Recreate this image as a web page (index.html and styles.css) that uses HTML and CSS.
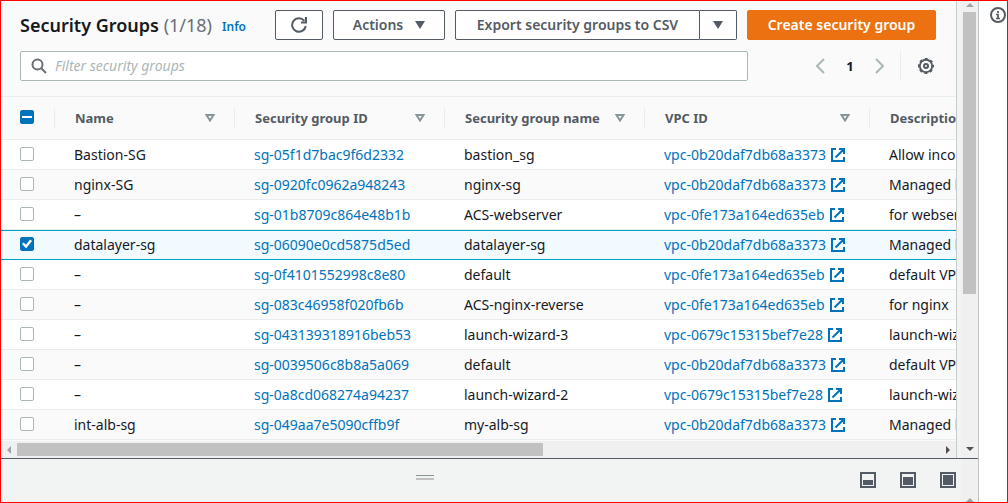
FILE: index.html
```
<!DOCTYPE html>
<html lang="en">
<head>
<meta charset="utf-8">
<title>Security Groups</title>
<link rel="stylesheet" href="styles.css">
</head>
<body>
<svg class="defs" aria-hidden="true">
  <symbol id="external" viewBox="0 0 16 16"><path d="M6 2H2v12h12v-4M9 2h5v5M14 2L5.500 10.500" fill="none" stroke="currentColor" stroke-width="2"/></symbol>
  <symbol id="sort" viewBox="0 0 10 8"><path d="M1.500 1h7L5 6.500z" fill="none" stroke="currentColor" stroke-width="2"/></symbol>
  <symbol id="caret" viewBox="0 0 10 8"><path d="M0 0h10L5 8z" fill="currentColor"/></symbol>
</svg>
<div class="app">
  <div class="workspace">
    <div class="upper">
      <main class="panel">
        <header class="toolbar">
          <h1 class="title">Security Groups <span class="count">(1/18)</span></h1>
          <a class="info" href="#">Info</a>
          <div class="actions">
            <button class="btn icon-btn" aria-label="Refresh"><svg width="16" height="16" viewBox="0 0 16 16" fill="none" stroke="currentColor" stroke-width="2"><path d="M14.700 9A6.800 6.800 0 1 1 13.300 3.800"/><path d="M10 5.500h5V0"/></svg></button>
            <button class="btn menu-btn">Actions <svg class="caret"><use href="#caret"/></svg></button>
            <div class="split">
              <button class="btn export">Export security groups to CSV</button>
              <button class="btn more" aria-label="More export options"><svg class="caret"><use href="#caret"/></svg></button>
            </div>
            <button class="btn primary">Create security group</button>
          </div>
        </header>
        <div class="filters">
          <label class="search">
            <svg width="16" height="16" viewBox="0 0 16 16" fill="none" stroke="currentColor" stroke-width="2"><circle cx="6.500" cy="6.500" r="5"/><path d="M10 10l5 5"/></svg>
            <input type="text" placeholder="Filter security groups" aria-label="Filter security groups">
          </label>
          <nav class="pages" aria-label="Pagination">
            <button class="plain pale" aria-label="Previous page"><svg width="10" height="16" viewBox="0 0 10 16" fill="none" stroke="currentColor" stroke-width="2"><path d="M9 1L2 8l7 7"/></svg></button>
            <button class="plain page">1</button>
            <button class="plain pale" aria-label="Next page"><svg width="10" height="16" viewBox="0 0 10 16" fill="none" stroke="currentColor" stroke-width="2"><path d="M1 1l7 7-7 7"/></svg></button>
          </nav>
          <button class="plain settings" aria-label="Preferences"><svg width="16" height="16" viewBox="0 0 16 16" fill="none" stroke="currentColor"><circle cx="8" cy="8" r="6.200" stroke-width="1.900"/><circle cx="8" cy="8" r="7.300" stroke-width="1.500" stroke-dasharray="3 2.733" stroke-dashoffset="1.500"/><circle cx="8" cy="8" r="2" stroke-width="2"/></svg></button>
        </div>
        <table class="groups">
          <colgroup><col class="c-check"><col class="c-name"><col class="c-id"><col class="c-group"><col class="c-vpc"><col></colgroup>
          <thead>
            <tr>
              <th><input type="checkbox" class="check mixed" aria-label="Select all"></th>
              <th><div class="head">Name <svg class="sort"><use href="#sort"/></svg></div></th>
              <th><div class="head">Security group ID <svg class="sort"><use href="#sort"/></svg></div></th>
              <th><div class="head">Security group name <svg class="sort"><use href="#sort"/></svg></div></th>
              <th><div class="head">VPC ID <svg class="sort"><use href="#sort"/></svg></div></th>
              <th><div class="head">Description</div></th>
            </tr>
          </thead>
          <tbody>
            <tr><td><input type="checkbox" class="check" aria-label="Select Bastion-SG"></td><td>Bastion-SG</td><td><a href="#">sg-05f1d7bac9f6d2332</a></td><td>bastion_sg</td><td><a href="#">vpc-0b20daf7db68a3373 <svg class="ext"><use href="#external"/></svg></a></td><td>Allow incoming</td></tr>
            <tr><td><input type="checkbox" class="check" aria-label="Select nginx-SG"></td><td>nginx-SG</td><td><a href="#">sg-0920fc0962a948243</a></td><td>nginx-sg</td><td><a href="#">vpc-0b20daf7db68a3373 <svg class="ext"><use href="#external"/></svg></a></td><td>Managed by</td></tr>
            <tr><td><input type="checkbox" class="check" aria-label="Select ACS-webserver"></td><td>–</td><td><a href="#">sg-01b8709c864e48b1b</a></td><td>ACS-webserver</td><td><a href="#">vpc-0fe173a164ed635eb <svg class="ext"><use href="#external"/></svg></a></td><td>for webserver</td></tr>
            <tr class="selected"><td><input type="checkbox" class="check" checked aria-label="Select datalayer-sg"></td><td>datalayer-sg</td><td><a href="#">sg-06090e0cd5875d5ed</a></td><td>datalayer-sg</td><td><a href="#">vpc-0b20daf7db68a3373 <svg class="ext"><use href="#external"/></svg></a></td><td>Managed by</td></tr>
            <tr><td><input type="checkbox" class="check" aria-label="Select default"></td><td>–</td><td><a href="#">sg-0f4101552998c8e80</a></td><td>default</td><td><a href="#">vpc-0fe173a164ed635eb <svg class="ext"><use href="#external"/></svg></a></td><td>default VPC</td></tr>
            <tr><td><input type="checkbox" class="check" aria-label="Select ACS-nginx-reverse"></td><td>–</td><td><a href="#">sg-083c46958f020fb6b</a></td><td>ACS-nginx-reverse</td><td><a href="#">vpc-0fe173a164ed635eb <svg class="ext"><use href="#external"/></svg></a></td><td>for nginx</td></tr>
            <tr><td><input type="checkbox" class="check" aria-label="Select launch-wizard-3"></td><td>–</td><td><a href="#">sg-043139318916beb53</a></td><td>launch-wizard-3</td><td><a href="#">vpc-0679c15315bef7e28 <svg class="ext"><use href="#external"/></svg></a></td><td>launch-wizard</td></tr>
            <tr><td><input type="checkbox" class="check" aria-label="Select default"></td><td>–</td><td><a href="#">sg-0039506c8b8a5a069</a></td><td>default</td><td><a href="#">vpc-0b20daf7db68a3373 <svg class="ext"><use href="#external"/></svg></a></td><td>default VPC</td></tr>
            <tr><td><input type="checkbox" class="check" aria-label="Select launch-wizard-2"></td><td>–</td><td><a href="#">sg-0a8cd068274a94237</a></td><td>launch-wizard-2</td><td><a href="#">vpc-0679c15315bef7e28 <svg class="ext"><use href="#external"/></svg></a></td><td>launch-wizard</td></tr>
            <tr><td><input type="checkbox" class="check" aria-label="Select int-alb-sg"></td><td>int-alb-sg</td><td><a href="#">sg-049aa7e5090cffb9f</a></td><td>my-alb-sg</td><td><a href="#">vpc-0b20daf7db68a3373 <svg class="ext"><use href="#external"/></svg></a></td><td>Managed by</td></tr>
          </tbody>
        </table>
        <div class="hscroll"><span class="arrow left"></span><span class="track"><span class="hthumb"></span></span><span class="arrow right"></span></div>
      </main>
      <div class="vscroll"><span class="arrow up"></span><span class="vthumb"></span><span class="arrow down"></span></div>
    </div>
    <footer class="details">
      <div class="drag-area"><span class="handle"></span></div>
      <div class="sizes">
        <button class="plain" aria-label="Small panel"><svg width="16" height="16" viewBox="0 0 16 16"><rect x="1" y="1" width="14" height="14" fill="none" stroke="currentColor" stroke-width="2"/><rect x="3" y="8" width="10" height="5" fill="currentColor"/></svg></button>
        <button class="plain" aria-label="Medium panel"><svg width="16" height="16" viewBox="0 0 16 16"><rect x="1" y="1" width="14" height="14" fill="none" stroke="currentColor" stroke-width="2"/><rect x="3" y="5" width="10" height="8" fill="currentColor"/></svg></button>
        <button class="plain" aria-label="Full panel"><svg width="16" height="16" viewBox="0 0 16 16"><rect x="1" y="1" width="14" height="14" fill="none" stroke="currentColor" stroke-width="2"/><rect x="3" y="3" width="10" height="10" fill="currentColor"/></svg></button>
      </div>
      <div class="corner"><span class="arrow up"></span></div>
    </footer>
  </div>
  <aside class="rail">
    <button class="plain" aria-label="Open help panel"><svg width="16" height="16" viewBox="0 0 16 16" fill="none" stroke="currentColor" stroke-width="2"><circle cx="8" cy="8" r="7"/><path d="M8 4v2M6 7.500h2V11M6 11.500h4" stroke-width="1.700"/></svg></button>
  </aside>
</div>
</body>
</html>
```
FILE: styles.css
```
* { box-sizing: border-box; }
body { margin: 0; font: 14px/20px "Noto Sans", "Open Sans", sans-serif; color: #16191f; }
a { color: #0073bb; text-decoration: none; }
button { font: inherit; color: #545b64; margin: 0; cursor: pointer; }
svg { display: block; flex: none; }
.defs { position: absolute; width: 0; height: 0; }

.app { display: flex; height: 100vh; border: 1px solid #f00; overflow: hidden; background: #fff; }
.workspace { flex: 1; min-width: 0; display: flex; flex-direction: column; border-right: 1px solid #bfc5c7; background: #f2f3f3; }
.upper { flex: 1; min-height: 0; display: flex; }
.panel { flex: 1; min-width: 0; display: flex; flex-direction: column; background: #fafafa; border-right: 1px solid #c6cccd; overflow: hidden; }

.toolbar { display: flex; align-items: center; padding: 9px 20px 0 19px; white-space: nowrap; }
.title { margin: 0; font-size: 18px; line-height: 30px; font-weight: 600; }
.count { font-weight: 400; color: #687078; }
.info { margin-left: 10px; font-size: 12px; font-weight: 600; padding-top: 3px; }
.actions { margin-left: auto; display: flex; gap: 10px; }
.btn { height: 30px; padding: 0 20px; display: flex; align-items: center; justify-content: center; border: 1px solid #545b64; border-radius: 2px; background: #fff; font-size: 14px; font-weight: 600; }
.icon-btn { width: 48px; padding: 0; }
.menu-btn { width: 112px; padding: 0; gap: 12px; }
.caret { width: 10px; height: 8px; }
.split { display: flex; }
.export { width: 245px; padding: 0; border-radius: 2px 0 0 2px; }
.more { width: 37px; padding: 0; border-left: 0; border-radius: 0 2px 2px 0; }
.primary { width: 189px; padding: 0; background: #ec7211; border-color: #ec7211; color: #fff; }

.filters { display: flex; align-items: center; padding: 11px 20px 15px 19px; }
.search { flex: 1; display: flex; align-items: center; gap: 8px; height: 30px; padding: 0 10px; border: 1px solid #aab7b8; border-radius: 2px; background: #fff; color: #687078; }
.search input { flex: 1; min-width: 0; border: 0; padding: 0; background: none; font: inherit; outline: 0; }
.search input::placeholder { color: #aab7b8; font-style: italic; opacity: 1; }
.plain { display: flex; align-items: center; justify-content: center; border: 0; padding: 0; background: none; }
.pages { display: flex; align-items: center; padding-left: 67px; }
.pages .plain { width: 10px; }
.pages .page { width: 50px; font-size: 13px; font-weight: 700; color: #16191f; }
.pages .pale, .pale { color: #aab7b8; }
.settings { width: 36px; height: 30px; margin-left: 15px; padding: 0 2px 0 16px; border-left: 1px solid #eaeded; }

.groups { width: 100%; table-layout: fixed; border-collapse: separate; border-spacing: 0; border-top: 1px solid #eaeded; }
.c-check { width: 54px; }
.c-name { width: 180px; }
.c-id { width: 210px; }
.c-group { width: 200px; }
.c-vpc { width: 225px; }
.groups th, .groups td { padding: 0 0 0 19px; white-space: nowrap; overflow: hidden; text-align: left; border-bottom: 1px solid #eaeded; }
.groups th { height: 43px; font-size: 13px; font-weight: 700; color: #545b64; }
.groups td { height: 30px; background: #fff; }
.groups tbody tr:nth-child(even) td { background: #fafafa; }
.groups tbody tr.selected td { background: #f1faff; border-top: 1px solid #00a1c9; border-bottom-color: #00a1c9; }
.head { display: flex; align-items: center; justify-content: space-between; height: 21px; padding-right: 20px; }
th + th .head { margin-left: -20px; padding-left: 20px; border-left: 1px solid #eaeded; }
.groups th + th { padding-left: 19px; overflow: visible; }
.sort { width: 10px; height: 8px; color: #879596; }
td a { display: inline-flex; align-items: center; gap: 4px; vertical-align: top; }
.ext { width: 16px; height: 16px; }
.check { appearance: none; display: block; width: 14px; height: 14px; margin: 0 0 2px; border: 1px solid #aab7b8; border-radius: 2px; background: #fff; }
.check:checked, .mixed { background: #0073bb; border-color: #0073bb; }
.check:checked::before { content: ""; display: block; width: 12px; height: 12px; background: #fff; clip-path: polygon(8% 51%, 22% 37%, 41% 56%, 76% 12%, 92% 25%, 43% 86%); }
.mixed::before { content: ""; display: block; width: 10px; height: 2px; margin: 5px 1px; background: #fff; }

.hscroll { display: flex; align-items: center; gap: 6px; height: 17px; margin-top: auto; padding: 0 6px; background: #f0f0f0; }
.track { flex: 1; }
.hthumb { display: block; width: 57%; height: 13px; background: #c1c1c1; }
.vscroll { display: flex; flex-direction: column; align-items: center; width: 17px; margin-left: 4px; padding: 2px 0 7px; background: #f0f0f0; }
.vthumb { width: 13px; height: 63%; margin-top: 5px; background: #c1c1c1; }
.arrow { flex: none; width: 0; height: 0; border: 4px solid transparent; }
.up { border-bottom-color: #a3a3a3; border-top: 0; }
.down { margin-top: auto; border-top-color: #505050; border-bottom: 0; }
.left { border-right-color: #a3a3a3; border-left: 0; }
.right { border-left-color: #505050; border-right: 0; }

.details { display: flex; height: 44px; border-top: 1px solid #545b64; }
.drag-area { flex: 1; display: flex; justify-content: center; padding: 16px 12px 0 0; }
.handle { width: 18px; height: 5px; border-top: 1px solid #879596; border-bottom: 2px solid #c1c1c1; }
.sizes { display: flex; align-items: center; gap: 24px; padding: 0 5px 2px 0; }
.corner { display: flex; justify-content: center; align-items: flex-end; width: 17px; background: #f0f0f0; }
.rail { width: 28px; padding: 6px 0 0 11px; }
```
